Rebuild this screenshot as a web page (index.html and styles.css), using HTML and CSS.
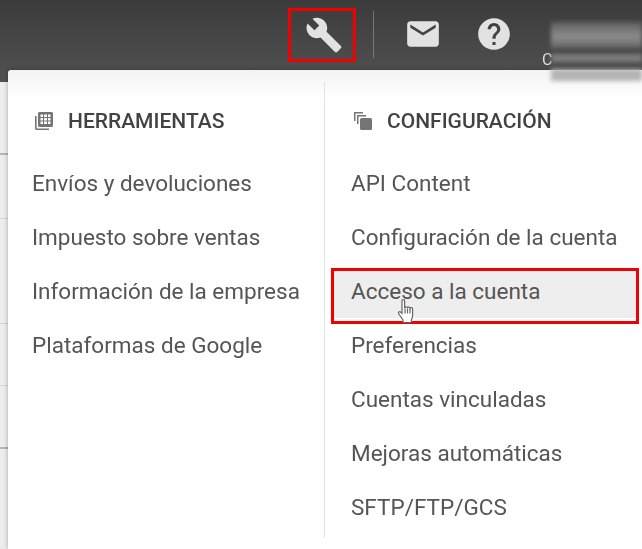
FILE: index.html
```html
<html>
  <head>
    <title>Herramientas</title>
    <link rel="stylesheet" href="styles.css">
  </head>
  <body>
    <header class="topbar">
      <div class="tool-box">
        <svg class="icon" viewBox="0 0 24 24"><path d="M22.7 19l-9.1-9.1c.9-2.3.4-5-1.5-6.9-2-2-5-2.4-7.4-1.3L9 6 6 9 1.6 4.7C.4 7.1.9 10.1 2.9 12.1c1.9 1.9 4.6 2.4 6.9 1.5l9.1 9.1c.4.4 1 .4 1.4 0l2.3-2.3c.5-.4.5-1.1.1-1.4z"/></svg>
      </div>
      <div class="separator"></div>
      <svg class="icon mail" viewBox="0 0 24 24"><path d="M20 4H4c-1.1 0-1.99.9-1.99 2L2 18c0 1.1.9 2 2 2h16c1.1 0 2-.9 2-2V6c0-1.1-.9-2-2-2zm0 4l-8 5-8-5V6l8 5 8-5v2z"/></svg>
      <svg class="icon help" viewBox="0 0 24 24"><path d="M12 2C6.48 2 2 6.48 2 12s4.48 10 10 10 10-4.48 10-10S17.52 2 12 2zm1 17h-2v-2h2v2zm2.07-7.75l-.9.92C13.45 12.9 13 13.5 13 15h-2v-.5c0-1.1.45-2.1 1.17-2.83l1.24-1.26c.37-.36.59-.86.59-1.41 0-1.1-.9-2-2-2s-2 .9-2 2H8c0-2.21 1.79-4 4-4s4 1.79 4 4c0 .88-.36 1.68-.93 2.25z"/></svg>
    </header>

    <div class="page-lines"></div>

    <div class="menu">
      <section class="col col-left">
        <h2 class="col-title">
          <svg class="title-icon" viewBox="0 0 20 20">
            <path d="M1 5v12.500c0 .8.7 1.500 1.500 1.500H15v-1.600H3c-.3 0-.4-.2-.4-.4V5z"/>
            <path fill-rule="evenodd" d="M5.500 1h12c.8 0 1.500.7 1.500 1.500v12c0 .8-.7 1.500-1.500 1.500h-12c-.8 0-1.500-.7-1.500-1.500v-12C4 1.700 4.700 1 5.500 1zM6.500 3.500v2.500h2.500V3.500zM10 3.500v2.500h3V3.500zM14 3.500v2.500h2.500V3.500zM6.500 7v2.500h2.500V7zM10 7v2.500h3V7zM14 7v2.500h2.500V7zM6.500 10.500v2.500h2.500v-2.500zM10 10.500v2.500h3v-2.500zM14 10.500v2.500h2.500v-2.500z"/>
          </svg>
          HERRAMIENTAS
        </h2>
        <ul class="links">
          <li>Envíos y devoluciones</li>
          <li>Impuesto sobre ventas</li>
          <li>Información de la empresa</li>
          <li>Plataformas de Google</li>
        </ul>
      </section>
      <section class="col col-right">
        <h2 class="col-title">
          <svg class="title-icon" viewBox="0 0 20 20">
            <path d="M1 1h9v1.500H2.500V10H1z"/>
            <path d="M4 4h9v1.500H5.500V13H4z"/>
            <rect x="7" y="7" width="12" height="12" rx="1.500"/>
          </svg>
          CONFIGURACIÓN
        </h2>
        <ul class="links">
          <li>API Content</li>
          <li>Configuración de la cuenta</li>
          <li class="active">
            Acceso a la cuenta
            <span class="red-box"></span>
            <svg class="hand" viewBox="0 0 18 27">
              <path d="M5 2.500c0-1.300 2.600-1.300 2.600 0V10c.3-1.400 2.600-1.400 2.800 0 .3-1.200 2.500-1.100 2.700.2.400-1 2.400-.8 2.500.6v6.700c0 2.200-.6 3.200-1.300 4.500v2.500H6v-2.500c-1-1.600-2.600-3.500-4.300-6.200-1-1.600.9-2.900 2.100-1.500L5 15.300z"/>
              <path class="hand-lines" d="M8 10.500v5M10.500 10.500v5M13 10.700v4.800"/>
            </svg>
          </li>
          <li>Preferencias</li>
          <li>Cuentas vinculadas</li>
          <li>Mejoras automáticas</li>
          <li>SFTP/FTP/GCS</li>
        </ul>
      </section>
    </div>

    <div class="account">
      <span class="account-letter">C</span>
      <div class="smear smear-1"></div>
      <div class="smear smear-2"></div>
      <div class="smear smear-3"></div>
    </div>
  </body>
</html>
```

FILE: styles.css
```css
html, body {
    margin: 0;
    padding: 0;
    height: 100%;
    overflow: hidden;
}
body {
    font-family: Roboto, "Liberation Sans", sans-serif;
    background: #ededed;
    position: relative;
}

.topbar {
    height: 82px;
    box-sizing: border-box;
    padding: 8px 0 0 288px;
    display: flex;
    align-items: flex-start;
    background: linear-gradient(#3b3b3b, #525252);
}
.icon {
    width: 38px;
    height: 38px;
    fill: #e2e2e2;
    display: block;
    filter: blur(.5px);
}
.tool-box {
    width: 68px;
    height: 54px;
    box-sizing: border-box;
    border: 3px solid #f00000;
    padding-left: 4px;
    display: flex;
    align-items: center;
    justify-content: center;
}
.separator {
    width: 1px;
    height: 47px;
    margin: 3px 0 0 17px;
    background: #777;
}
.mail {
    margin: 7px 0 0 30px;
}
.help {
    margin: 7px 0 0 33px;
}

.page-lines {
    height: 467px;
    width: 8px;
    background:
        linear-gradient(#b5b5b5, #b5b5b5) 0 71px / 8px 2px no-repeat,
        linear-gradient(#d4d4d4, #d4d4d4) 0 136px / 8px 1px no-repeat,
        linear-gradient(#d4d4d4, #d4d4d4) 0 241px / 8px 1px no-repeat,
        linear-gradient(#d4d4d4, #d4d4d4) 0 303px / 8px 1px no-repeat,
        linear-gradient(#b5b5b5, #b5b5b5) 0 365px / 8px 2px no-repeat;
}

.menu {
    position: absolute;
    top: 70px;
    left: 8px;
    right: 0;
    bottom: 0;
    display: flex;
    background: linear-gradient(#f3f3f3, #fff 30px);
    border-radius: 3px 0 0 0;
    box-shadow: 0 0 5px rgba(0, 0, 0, .3);
    filter: blur(.4px);
}
.col {
    margin: 12px 0 11px;
}
.col-left {
    width: 316px;
    padding-left: 24px;
    box-sizing: border-box;
}
.col-right {
    flex: 1;
    border-left: 1px solid #e2e2e2;
}
.col-title {
    height: 74px;
    box-sizing: border-box;
    padding-top: 4px;
    margin: 0;
    display: flex;
    align-items: center;
    gap: 14px;
    font-size: 21px;
    font-weight: 500;
    color: #424242;
}
.col-left .col-title {
    padding-left: 2px;
}
.col-right .col-title {
    padding-left: 28px;
}
.title-icon {
    width: 20px;
    height: 20px;
    fill: #757575;
}

.links {
    list-style: none;
    margin: 0;
    padding: 0;
}
.links li {
    height: 54px;
    line-height: 54px;
    font-size: 22.5px;
    color: #555;
    white-space: nowrap;
}
.col-right .links li {
    padding-left: 26px;
}
.links li.active {
    position: relative;
    margin: 0 3px 0 6px;
    padding-left: 20px;
    background: linear-gradient(#fff 4px, #eee 4px);
}

.red-box {
    position: absolute;
    top: 4px;
    left: 0;
    right: 0;
    bottom: -6px;
    border: 3px solid #f00000;
}
.hand {
    position: absolute;
    left: 66px;
    top: 34px;
    width: 18px;
    height: 27px;
    fill: #fff;
    stroke: #666;
    stroke-width: 1.200;
}
.hand-lines {
    fill: none;
}

.account {
    position: absolute;
    top: 0;
    left: 542px;
    right: 0;
    height: 82px;
}
.account-letter {
    position: absolute;
    left: 0;
    top: 50px;
    font-size: 16px;
    color: #ddd;
}
.smear {
    position: absolute;
    left: 9px;
    right: 0;
    filter: blur(2px);
}
.smear-1 {
    top: 22px;
    height: 26px;
    background: linear-gradient(#5e5e5e, #8c8c8c 55%, #666);
}
.smear-2 {
    top: 54px;
    height: 8px;
    background: #7c7c7c;
}
.smear-3 {
    top: 69px;
    height: 12px;
    background: #b4b4b4;
}
```
